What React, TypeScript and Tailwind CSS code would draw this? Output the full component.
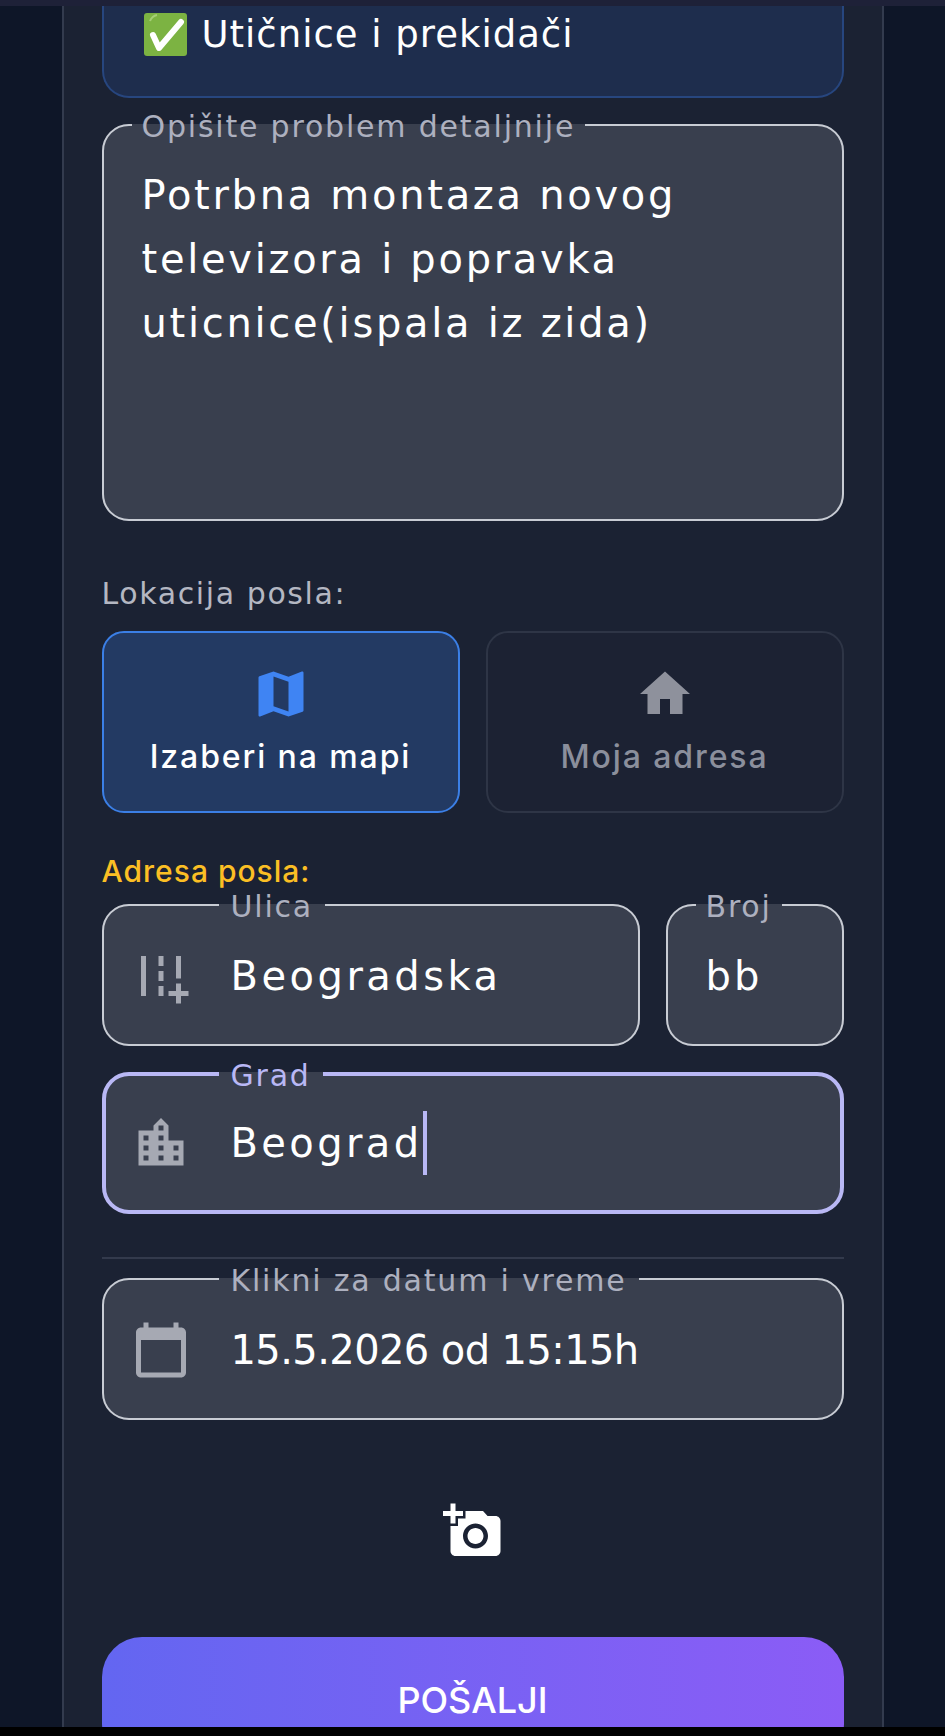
import type { ReactNode } from 'react';
import { MdAddAPhoto, MdAddRoad, MdCalendarToday, MdHome, MdLocationCity, MdMap } from 'react-icons/md';

function CheckEmoji() {
    return (
        <svg viewBox="0 0 43 43" className="h-[43px] w-[43px] shrink-0">
            <rect x="0" y="0" width="43" height="43" rx="3" fill="#7cb342" />
            <path d="M6 8 Q8 3 13 2" stroke="#a5cf76" strokeWidth="2" fill="none" />
            <path d="M9 22 L15 35 L37 9" stroke="#ffffff" strokeWidth="6" strokeLinecap="round" strokeLinejoin="round" fill="none" />
        </svg>
    );
}

type FieldProps = {
    label: string;
    legendClass: string;
    className: string;
    children: ReactNode;
};

function Field({ label, legendClass, className, children }: FieldProps) {
    return (
        <fieldset className={`rounded-[27px] bg-[#393f4e] ${className}`}>
            <legend className={`h-[36px] pt-[2px] text-[30px] leading-[36px] tracking-[1.8px] ${legendClass}`}>{label}</legend>
            {children}
        </fieldset>
    );
}

export default function App() {
    return (
        <div className="flex h-[1736px] flex-col overflow-hidden bg-black font-['DejaVu_Sans',sans-serif] text-white">
            <div className="h-[6px] shrink-0 bg-[#1e2138]" />
            <div className="flex min-h-0 flex-1 justify-center overflow-hidden bg-[#0e1628]">
                <main className="h-full w-[822px] overflow-hidden border-x-2 border-[#333b4e] bg-[#1b2233] px-[38px]">
                    <div className="flex h-[92px] items-start gap-[15px] rounded-b-[27px] border-x-2 border-b-2 border-[#27467f] bg-[#1e2d4d] pl-[40px] pt-[7px]">
                        <CheckEmoji />
                        <span className="mt-[1px] text-[37px] leading-[42px] tracking-[1px]">Utičnice i prekidači</span>
                    </div>

                    <Field
                        label="Opišite problem detaljnije"
                        legendClass="ml-[28px] px-[10px] text-[#adb0bf]"
                        className="mt-[9px] h-[414px] border-2 border-[#c8ccd4]"
                    >
                        <p className="pl-[38px] pr-[20px] pt-[20px] text-[40px] leading-[64px] tracking-[2.7px]">
                            Potrbna montaza novog televizora i popravka uticnice(ispala iz zida)
                        </p>
                    </Field>

                    <div className="mt-[55px] h-[36px] text-[30px] leading-[36px] tracking-[1.6px] text-[#b4b7c2]">Lokacija posla:</div>

                    <div className="mt-[19px] grid grid-cols-2 gap-[26px]">
                        <button className="flex h-[182px] flex-col items-center justify-center rounded-[22px] border-2 border-[#3b7fe6] bg-[#233a63] pb-[4px]">
                            <MdMap className="text-[60px] text-[#3f84f3]" />
                            <span className="mt-[13px] font-['Inter',sans-serif] text-[32px] font-medium leading-[40px] tracking-[1.9px]">Izaberi na mapi</span>
                        </button>
                        <button className="flex h-[182px] flex-col items-center justify-center rounded-[22px] border-2 border-[#2e3546] bg-[#1c2233] pb-[4px]">
                            <MdHome className="text-[60px] text-[#8e919c]" />
                            <span className="mt-[13px] font-['Inter',sans-serif] text-[32px] font-medium leading-[40px] tracking-[1.9px] text-[#8b8f9c]">Moja adresa</span>
                        </button>
                    </div>

                    <div className="mt-[40px] h-[36px] font-['Inter',sans-serif] text-[30px] font-medium leading-[36px] tracking-[1px] text-[#fbbf24]">Adresa posla:</div>

                    <div className="-mt-[2px] flex gap-[26px]">
                        <Field
                            label="Ulica"
                            legendClass="ml-[115px] px-[12px] text-[#adb0bf]"
                            className="h-[159px] flex-1 border-2 border-[#c8ccd4]"
                        >
                            <div className="-mt-[8px] flex h-[121px] items-center pl-[27px]">
                                <MdAddRoad className="text-[60px] text-[#a6a9b3]" />
                                <span className="ml-[40px] text-[40px] tracking-[3.5px]">Beogradska</span>
                            </div>
                        </Field>
                        <Field
                            label="Broj"
                            legendClass="ml-[28px] px-[10px] text-[#adb0bf]"
                            className="h-[159px] w-[178px] border-2 border-[#c8ccd4]"
                        >
                            <div className="-mt-[8px] flex h-[121px] items-center pl-[38px]">
                                <span className="text-[40px] tracking-[3px]">bb</span>
                            </div>
                        </Field>
                    </div>

                    <Field
                        label="Grad"
                        legendClass="ml-[113px] px-[12px] text-[#b9b8f5]"
                        className="mt-[10px] h-[158px] border-4 border-[#b9b8f5]"
                    >
                        <div className="-mt-[8px] flex h-[117px] items-center pl-[25px]">
                            <MdLocationCity className="text-[60px] text-[#a6a9b3]" />
                            <span className="ml-[40px] text-[40px] tracking-[3.4px]">Beograd</span>
                            <span className="h-[64px] w-[4px] bg-[#b9b8f5]" />
                        </div>
                    </Field>

                    <div className="mt-[43px] h-[2px] bg-[#333a4c]" />

                    <Field
                        label="Klikni za datum i vreme"
                        legendClass="ml-[115px] px-[12px] text-[#adb0bf]"
                        className="mt-[2px] h-[159px] border-2 border-[#c8ccd4]"
                    >
                        <div className="-mt-[8px] flex h-[121px] items-center pl-[27px]">
                            <MdCalendarToday className="text-[60px] text-[#a6a9b3]" />
                            <span className="ml-[40px] text-[40px] tracking-[-0.6px]">15.5.2026 od 15:15h</span>
                        </div>
                    </Field>

                    <div className="mt-[81px] flex justify-center">
                        <MdAddAPhoto className="text-[60px] text-white" />
                    </div>

                    <button className="mt-[76px] block h-[126px] w-full rounded-[40px] bg-gradient-to-r from-[#6366f1] to-[#8b5cf6] font-['Inter',sans-serif] text-[36px] font-medium">
                        POŠALJI
                    </button>
                </main>
            </div>
            <div className="h-[9px] shrink-0 bg-black" />
        </div>
    );
}
